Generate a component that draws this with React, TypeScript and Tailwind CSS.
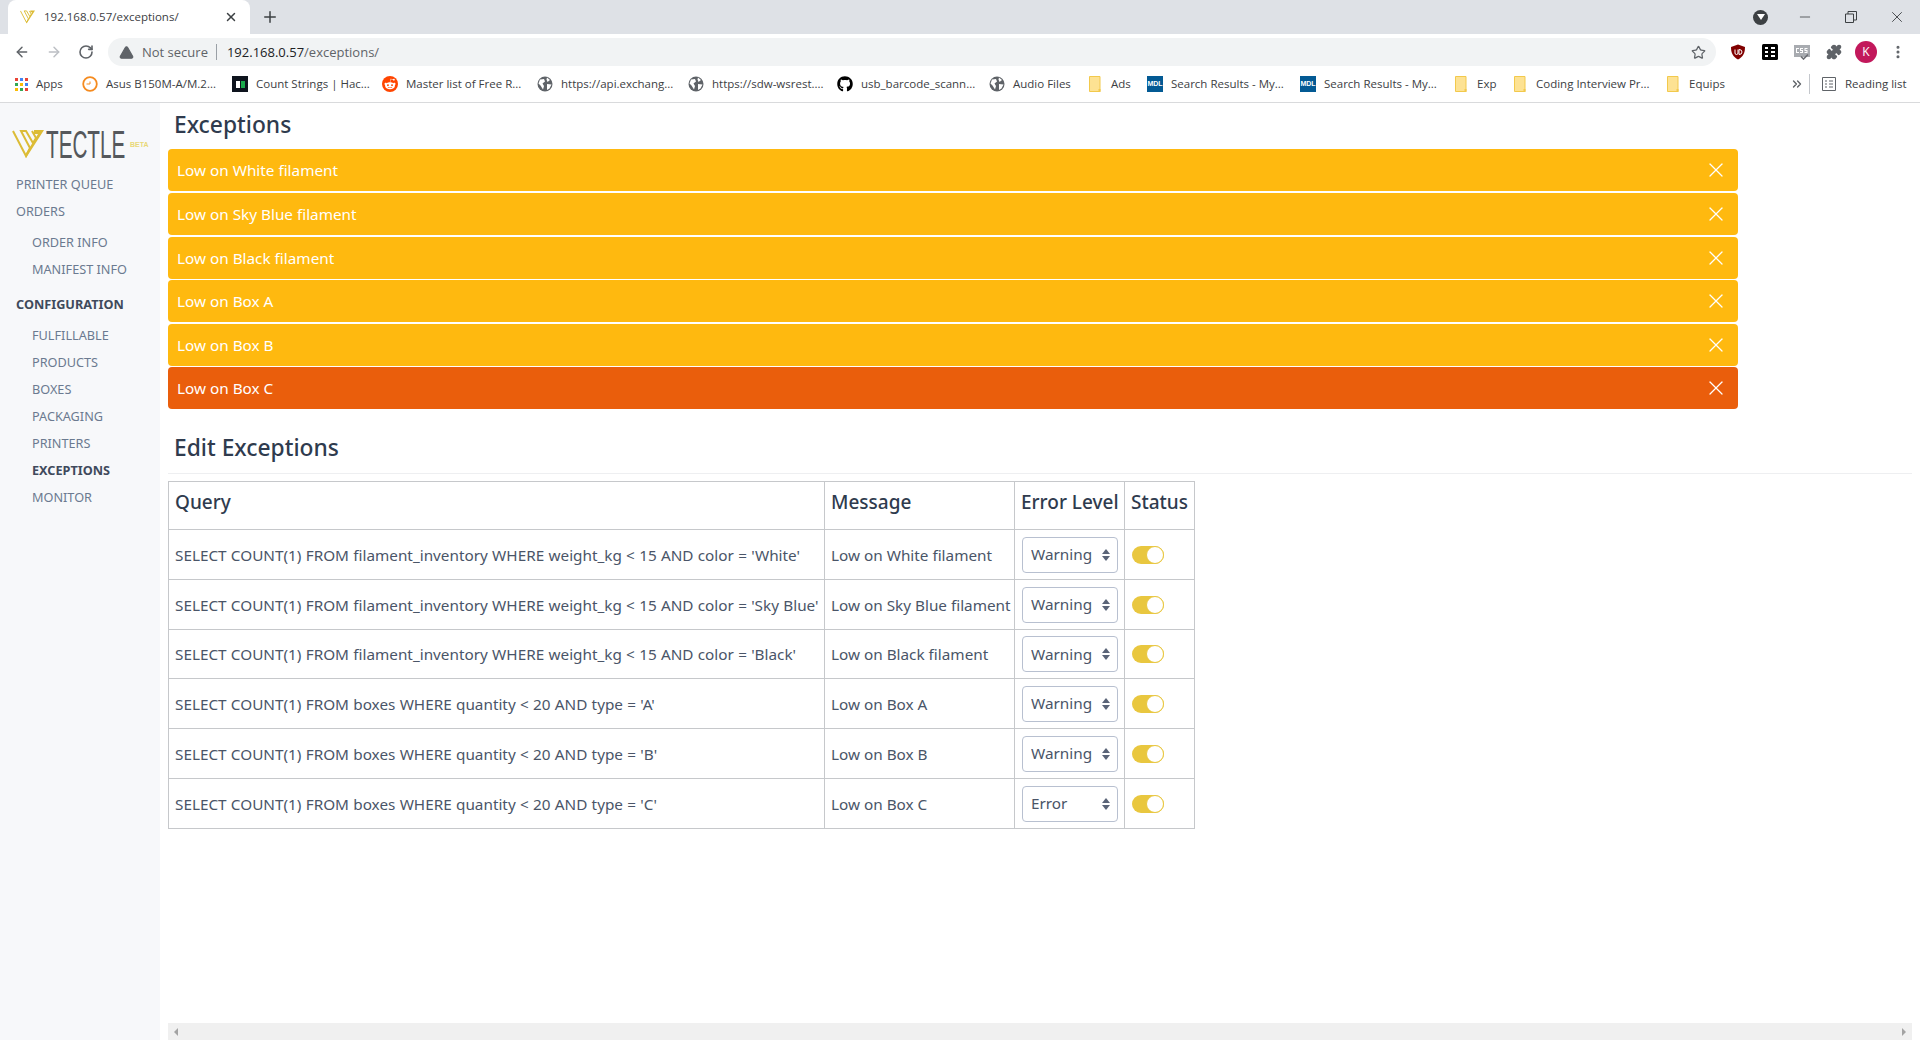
import { AlertTriangle, ArrowLeft, ArrowRight, ChevronsRight, Minus, MoreVertical, Plus, Puzzle, RotateCw, Star, X } from "lucide-react";
import { FaGithub, FaRedditAlien } from "react-icons/fa";

const uiFont = "font-['Noto_Sans',sans-serif]";

const alerts = [
  { text: "Low on White filament", color: "bg-[#ffb90f]", gap: "mb-[2px]" },
  { text: "Low on Sky Blue filament", color: "bg-[#ffb90f]", gap: "mb-[2px]" },
  { text: "Low on Black filament", color: "bg-[#ffb90f]", gap: "mb-[1px]" },
  { text: "Low on Box A", color: "bg-[#ffb90f]", gap: "mb-[2px]" },
  { text: "Low on Box B", color: "bg-[#ffb90f]", gap: "mb-[1px]" },
  { text: "Low on Box C", color: "bg-[#ea5e0c]", gap: "" },
];

const rows = [
  { query: "SELECT COUNT(1) FROM filament_inventory WHERE weight_kg < 15 AND color = 'White'", message: "Low on White filament", level: "Warning", h: "h-[50px]" },
  { query: "SELECT COUNT(1) FROM filament_inventory WHERE weight_kg < 15 AND color = 'Sky Blue'", message: "Low on Sky Blue filament", level: "Warning", h: "h-[50px]" },
  { query: "SELECT COUNT(1) FROM filament_inventory WHERE weight_kg < 15 AND color = 'Black'", message: "Low on Black filament", level: "Warning", h: "h-[49px]" },
  { query: "SELECT COUNT(1) FROM boxes WHERE quantity < 20 AND type = 'A'", message: "Low on Box A", level: "Warning", h: "h-[50px]" },
  { query: "SELECT COUNT(1) FROM boxes WHERE quantity < 20 AND type = 'B'", message: "Low on Box B", level: "Warning", h: "h-[50px]" },
  { query: "SELECT COUNT(1) FROM boxes WHERE quantity < 20 AND type = 'C'", message: "Low on Box C", level: "Error", h: "h-[50px]" },
];

function TectleMark({ className }: { className: string }) {
  return (
    <svg viewBox="0 0 32 28" className={className}>
      <path d="M1 1 L14 26 L18 18 L9 1 L14 1 L21 13 L24 8 L20 1" fill="none" stroke="#dcbc36" strokeWidth="2" />
      <path d="M22 0 H32 L14 28 L13 25 L26 4 L22 4 Z" fill="#dcbc36" />
    </svg>
  );
}

function Globe() {
  return (
    <svg viewBox="0 0 16 16" className="w-4 h-4 shrink-0">
      <circle cx="8" cy="8" r="7.5" fill="#5f6368" />
      <path d="M3 3.5 L7 3 L8 5.5 L5.5 7.5 L7 10 L6 13.5 L3.5 9.5 L1.5 7.5 Z M10 1.5 L13 4 L10.5 6 L9.5 3.5 Z M10 8 L14.5 8.5 L12.5 12.5 L10 14 Z" fill="#fff" />
    </svg>
  );
}

function Folder() {
  return (
    <svg viewBox="0 0 12 16" className="w-3 h-4 mr-[2px] shrink-0">
      <path d="M.5.5h10.5v15H.5z" fill="#fde293" stroke="#f2c94c" />
      <path d="M9.5 13h2v3h-2z" fill="#f2c94c" />
    </svg>
  );
}

function Mdl() {
  return <span className="w-4 h-4 shrink-0 bg-[#035a94] text-white text-[7px] font-bold leading-4 text-center font-['Liberation_Sans',sans-serif]">MDL</span>;
}

function AppsGrid() {
  const dots = ["#ea4335", "#4285f4", "#ea4335", "#34a853", "#fbbc05", "#4285f4", "#fbbc05", "#34a853", "#ea4335"];
  return (
    <span className="w-[13px] h-[13px] shrink-0 grid grid-cols-3 gap-[2px]">
      {dots.map((c, i) => (
        <svg key={i} viewBox="0 0 3 3" className="w-[3px] h-[3px]"><rect width="3" height="3" fill={c} /></svg>
      ))}
    </span>
  );
}

function AsusClock() {
  return (
    <svg viewBox="0 0 16 16" className="w-4 h-4 shrink-0">
      <circle cx="8" cy="8" r="6.8" fill="#fff" stroke="#f58b1f" strokeWidth="1.8" />
      <path d="M8 8 H4.5 M8 8 V5.5" stroke="#f58b1f" strokeWidth="1" fill="none" />
    </svg>
  );
}

function HackIcon() {
  return (
    <span className="w-4 h-4 shrink-0 bg-[#0e141e] flex items-center justify-center gap-[1px]">
      <span className="w-[4px] h-[7px] bg-white" />
      <span className="w-[4px] h-[7px] bg-[#1ba94c]" />
    </span>
  );
}

function RedditIcon() {
  return (
    <span className="w-4 h-4 shrink-0 rounded-full bg-[#ff4500] flex items-center justify-center">
      <FaRedditAlien className="w-3 h-3 text-white" />
    </span>
  );
}

const bookmarks = [
  { icon: <AppsGrid />, label: "Apps", w: "w-[67px]" },
  { icon: <AsusClock />, label: "Asus B150M-A/M.2...", w: "w-[150px]" },
  { icon: <HackIcon />, label: "Count Strings | Hac...", w: "w-[150px]" },
  { icon: <RedditIcon />, label: "Master list of Free R...", w: "w-[155px]" },
  { icon: <Globe />, label: "https://api.exchang...", w: "w-[151px]" },
  { icon: <Globe />, label: "https://sdw-wsrest....", w: "w-[149px]" },
  { icon: <FaGithub className="w-4 h-4 shrink-0 text-black" />, label: "usb_barcode_scann...", w: "w-[152px]" },
  { icon: <Globe />, label: "Audio Files", w: "w-[100px]" },
  { icon: <Folder />, label: "Ads", w: "w-[58px]" },
  { icon: <Mdl />, label: "Search Results - My...", w: "w-[153px]" },
  { icon: <Mdl />, label: "Search Results - My...", w: "w-[155px]" },
  { icon: <Folder />, label: "Exp", w: "w-[59px]" },
  { icon: <Folder />, label: "Coding Interview Pr...", w: "w-[153px]" },
  { icon: <Folder />, label: "Equips", w: "w-[123px]" },
];

function BrowserChrome() {
  return (
    <header className={`shrink-0 font-['Open_Sans',sans-serif]`}>
      <div className="h-[34px] bg-[#dee1e6] flex items-end pl-2">
        <div className="h-[34px] w-[242px] bg-white rounded-t-lg flex items-center pl-3 pr-3">
          <TectleMark className="w-[15px] h-[14px] shrink-0" />
          <span className="ml-[9px] text-[11.5px] text-[#3c4043] flex-1">192.168.0.57/exceptions/</span>
          <X className="w-[14px] h-[14px] text-[#3c4043]" strokeWidth={2.5} />
        </div>
        <div className="h-[34px] w-[40px] flex items-center justify-center">
          <Plus className="w-[18px] h-[18px] text-[#3c4043]" strokeWidth={2} />
        </div>
        <div className="flex-1 h-[34px] flex items-center justify-end">
          <span className="w-[15px] h-[15px] rounded-full bg-[#3c4043] flex items-center justify-center mr-[29px]">
            <span className="w-0 h-0 border-l-[4px] border-r-[4px] border-t-[6px] border-l-transparent border-r-transparent border-t-white" />
          </span>
          <Minus className="w-4 h-4 text-[#3c4043] mr-[32px]" strokeWidth={1.2} />
          <svg viewBox="0 0 12 12" className="w-3 h-3 mr-[31px]" fill="none" stroke="#3c4043">
            <path d="M.5 3h8v8.5h-8zM3 3V.5h8.5V9H8.5" />
          </svg>
          <X className="w-[18px] h-[18px] text-[#3c4043] mr-[14px]" strokeWidth={1.2} />
        </div>
      </div>

      <div className="h-[32px] bg-white flex items-center pt-[4px]">
        <div className="w-[108px] flex items-center pl-[14px] gap-4 shrink-0">
          <ArrowLeft className="w-4 h-4 text-[#5f6368]" strokeWidth={2.2} />
          <ArrowRight className="w-4 h-4 text-[#bcbfc4]" strokeWidth={2.2} />
          <RotateCw className="w-4 h-4 text-[#5f6368]" strokeWidth={2.4} />
        </div>
        <div className="w-[1608px] h-[28px] rounded-full bg-[#f1f3f4] flex items-center pl-[11px] pr-[10px]">
          <AlertTriangle className="w-[15px] h-[15px] text-[#5f6368] fill-[#5f6368] stroke-[#5f6368]" />
          <span className="ml-[8px] pt-px text-[#5f6368] text-[13px]">Not secure</span>
          <span className="ml-[8px] h-4 border-l border-[#9aa0a6]" />
          <span className="ml-[10px] pt-px text-[#202124] text-[13px]">192.168.0.57<span className="text-[#5f6368]">/exceptions/</span></span>
          <Star className="w-[15px] h-[15px] text-[#5f6368] ml-auto" strokeWidth={2} />
        </div>
        <div className="flex-1 flex items-center pl-[14px] gap-[16px]">
          <svg viewBox="0 0 16 16" className="w-4 h-4 shrink-0">
            <path d="M8 .5 L15 3 C15 9 13 13 8 15.5 C3 13 1 9 1 3 Z" fill="#800000" />
            <path d="M5 5.5 V9 Q5 10.5 6.500 10.500 Q8 10.500 8 9 V5.500 M9 5.500 V10.500 Q12 10.500 12 8 Q12 5.500 9 5.500" stroke="#fff" strokeWidth="1" fill="none" />
          </svg>
          <svg viewBox="0 0 16 16" className="w-4 h-4 shrink-0">
            <rect width="16" height="16" rx="1.5" fill="#000" />
            <path d="M3 3h3v2H3zM3 7h3v2H3zM3 11h3v2H3zM9 3h4v2H9zM9 7h4v2H9zM9 11h4v2H9z" fill="#fff" />
          </svg>
          <svg viewBox="0 0 16 16" className="w-4 h-4 shrink-0">
            <rect y="1" width="16" height="12" fill="#a8abb0" />
            <path d="M2 4h3v1H3v3h2v1H2zM6 4h3v1H7v1h2v3H6V8h2V7H6zM10.500 4h3v1h-2v1h2v3h-3V8h2V7h-2z" fill="#fff" />
            <path d="M7 12.500 L9.500 15 L14 10.500" fill="none" stroke="#6b6e73" strokeWidth="1.6" />
          </svg>
          <Puzzle className="w-4 h-4 text-[#5f6368] fill-[#5f6368] shrink-0" />
          <span className="w-[22px] h-[22px] -mx-[3px] rounded-full bg-[#c2185b] text-white text-xs flex items-center justify-center shrink-0">K</span>
          <MoreVertical className="w-4 h-4 text-[#5f6368] shrink-0" strokeWidth={2.6} />
        </div>
      </div>

      <div className="h-[37px] bg-white border-b border-[#d9dadc] flex items-center pl-[15px] text-[#3c4043] whitespace-nowrap">
        {bookmarks.map((b, i) => (
          <div key={i} className={`${b.w} shrink-0 flex items-center gap-2`}>
            {b.icon}
            <span className="text-[11.5px]">{b.label}</span>
          </div>
        ))}
        <ChevronsRight className="w-[14px] h-[14px] text-[#5f6368] shrink-0" strokeWidth={2.4} />
        <span className="ml-[5px] h-[20px] border-l border-[#c4c7cc]" />
        <svg viewBox="0 0 14 14" className="w-[14px] h-[14px] ml-[12px] shrink-0" fill="none" stroke="#5f6368">
          <path d="M.5.5h13v13H.5zM3 4h2M7 4h4M3 7h2M7 7h4M3 10h2M7 10h4" />
        </svg>
        <span className="ml-[9px] text-[11.5px]">Reading list</span>
      </div>
    </header>
  );
}

function NavLink({ label, sub, active, mt }: { label: string; sub?: boolean; active?: boolean; mt?: string }) {
  return (
    <a className={`block text-[12.7px] leading-[27px] ${sub ? "pl-8" : "pl-4"} ${mt ?? ""} ${active ? "font-bold text-[#3f4a5c]" : "text-[#6b7a90]"}`}>
      {label}
    </a>
  );
}

function Sidebar() {
  return (
    <aside className="w-40 shrink-0 bg-[#f7f8fa] pt-[27px]">
      <div className="flex items-start pl-3 h-[40px]">
        <TectleMark className="w-[32px] h-[28px] shrink-0" />
        <div className="w-[80px] h-[30px] ml-[2px] shrink-0">
          <span className="inline-block origin-top-left scale-x-[.53] whitespace-nowrap text-[39px] leading-[30px] text-[#55585c] font-['Liberation_Sans',sans-serif]">TECTLE</span>
        </div>
        <span className="ml-[4px] mt-[9px] text-[7px] leading-[12px] text-[#e9d878] font-bold font-['Liberation_Sans',sans-serif]">BETA</span>
      </div>
      <nav className="mt-px">
        <NavLink label="PRINTER QUEUE" />
        <NavLink label="ORDERS" />
        <NavLink label="ORDER INFO" sub mt="mt-1" />
        <NavLink label="MANIFEST INFO" sub />
        <a className="block text-[12.7px] leading-[27px] pl-4 mt-2 font-bold text-[#3f4a5c]">CONFIGURATION</a>
        <NavLink label="FULFILLABLE" sub mt="mt-1" />
        <NavLink label="PRODUCTS" sub />
        <NavLink label="BOXES" sub />
        <NavLink label="PACKAGING" sub />
        <NavLink label="PRINTERS" sub />
        <NavLink label="EXCEPTIONS" sub active />
        <NavLink label="MONITOR" sub />
      </nav>
    </aside>
  );
}

function LevelSelect({ value }: { value: string }) {
  return (
    <div className="relative w-[96px] h-[36px]">
      <select
        defaultValue={value}
        className="appearance-none w-full h-full bg-white border border-[#b8c0d0] rounded pl-2 pr-5 text-[15.3px] text-[#4a5568] outline-none"
      >
        <option>Warning</option>
        <option>Error</option>
      </select>
      <span className="absolute right-[8px] top-[12px] flex flex-col gap-[2px] pointer-events-none">
        <span className="w-0 h-0 border-l-[4px] border-r-[4px] border-b-[5px] border-l-transparent border-r-transparent border-b-[#5a6478]" />
        <span className="w-0 h-0 border-l-[4px] border-r-[4px] border-t-[5px] border-l-transparent border-r-transparent border-t-[#5a6478]" />
      </span>
    </div>
  );
}

function Toggle() {
  return (
    <div className="w-8 h-[18px] rounded-full bg-[#e9c73f] flex justify-end">
      <span className="w-[18px] h-[18px] rounded-full bg-white border border-[#e9c73f]" />
    </div>
  );
}

export default function App() {
  return (
    <div className={`h-screen flex flex-col overflow-hidden bg-white ${uiFont}`}>
      <BrowserChrome />
      <div className="flex-1 flex min-h-0">
        <Sidebar />
        <main className="flex-1 min-w-0 mx-2 flex flex-col">
          <div className="flex-1 min-h-0 overflow-hidden">
            <h2 className="text-[22.8px] leading-[36px] font-medium text-[#2f3b4e] pl-[6px] pt-[4px] h-[46px]">Exceptions</h2>
            <div className="w-[1570px]">
              {alerts.map((a) => (
                <div key={a.text} className={`h-[42px] rounded-sm ${a.color} ${a.gap} flex items-center justify-between pl-[9px] pr-[10px] text-white text-[15.3px]`}>
                  <span>{a.text}</span>
                  <X className="w-6 h-6" strokeWidth={1.3} />
                </div>
              ))}
            </div>
            <h2 className="mt-[21px] text-[22.8px] leading-[36px] font-medium text-[#2f3b4e] pl-[6px] pb-[7px] border-b border-[#eeeff1]">Edit Exceptions</h2>
            <table className="mt-[7px] w-[1026px] table-fixed border-collapse text-[15.3px] text-[#4a5568] whitespace-nowrap">
              <colgroup>
                <col className="w-[656px]" />
                <col className="w-[190px]" />
                <col className="w-[110px]" />
                <col className="w-[70px]" />
              </colgroup>
              <thead>
                <tr className="h-[48px] text-[#2f3b4e] text-[19px]">
                  <th className="border border-[#c6c8cb] px-[6px] pb-[6px] text-left font-medium">Query</th>
                  <th className="border border-[#c6c8cb] px-[6px] pb-[6px] text-left font-medium">Message</th>
                  <th className="border border-[#c6c8cb] px-[6px] pb-[6px] text-left font-medium">Error Level</th>
                  <th className="border border-[#c6c8cb] px-[6px] pb-[6px] text-left font-medium">Status</th>
                </tr>
              </thead>
              <tbody>
                {rows.map((r) => (
                  <tr key={r.message} className={r.h}>
                    <td className="border border-[#c6c8cb] px-[6px] pt-px [word-spacing:0.3px]">{r.query}</td>
                    <td className="border border-[#c6c8cb] px-[6px] pt-px">{r.message}</td>
                    <td className="border border-[#c6c8cb] px-[7px]"><LevelSelect value={r.level} /></td>
                    <td className="border border-[#c6c8cb] px-[7px]"><Toggle /></td>
                  </tr>
                ))}
              </tbody>
            </table>
          </div>
          <div className="h-[17px] shrink-0 bg-[#f0f0f0] flex items-center justify-between px-[6px]">
            <span className="w-0 h-0 border-t-[4px] border-b-[4px] border-r-[4px] border-t-transparent border-b-transparent border-r-[#a3a3a3]" />
            <span className="w-0 h-0 border-t-[4px] border-b-[4px] border-l-[4px] border-t-transparent border-b-transparent border-l-[#a3a3a3]" />
          </div>
        </main>
      </div>
    </div>
  );
}
